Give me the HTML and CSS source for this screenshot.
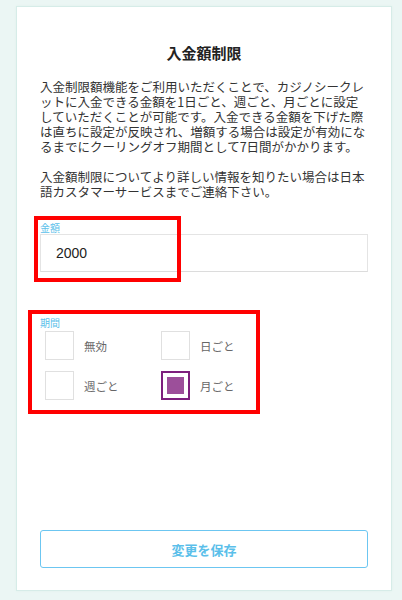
FILE: index.html
```html
<!DOCTYPE html>
<html lang="ja">

<head>
    <meta charset="UTF-8">
    <meta name="viewport" content="width=device-width, initial-scale=1.0">
    <title>入金額制限</title>
    <link rel="stylesheet" href="styles.css">
</head>

<body>
    <div class="card">
        <h1 class="title">入金額制限</h1>
        <p class="desc">入金制限額機能をご利用いただくことで、カジノシークレットに入金できる金額を1日ごと、週ごと、月ごとに設定していただくことが可能です。入金できる金額を下げた際は直ちに設定が反映され、増額する場合は設定が有効になるまでにクーリングオフ期間として7日間がかかります。</p>
        <p class="desc">入金額制限についてより詳しい情報を知りたい場合は日本語カスタマーサービスまでご連絡下さい。</p>

        <div class="field amount">
            <label class="field-label" for="amount">金額</label>
            <input class="amount-input" id="amount" type="text" value="2000">
        </div>

        <div class="field period">
            <div class="field-label">期間</div>
            <div class="options">
                <div class="option"><span class="check"></span>無効</div>
                <div class="option"><span class="check"></span>日ごと</div>
                <div class="option"><span class="check"></span>週ごと</div>
                <div class="option"><span class="check checked"></span>月ごと</div>
            </div>
        </div>

        <button class="save">変更を保存</button>

        <!-- 赤枠の注釈 -->
        <div class="mark mark-amount"></div>
        <div class="mark mark-period"></div>
    </div>
</body>

</html>
```

FILE: styles.css
```css
html,
body {
    height: 100%;
    overflow: hidden;
}

body {
    margin: 0;
    padding: 6px 10px 0 16px;
    box-sizing: border-box;
    background: #ebf6f4;
    font-family: "Noto Sans CJK JP", "Noto Sans", sans-serif;
    color: #333;
}

.card {
    position: relative;
    box-sizing: border-box;
    height: 585px;
    padding: 35px 23px 22px;
    background: #fff;
    border: 1px solid #d6ece8;
    box-shadow: 0 0 2px #e0f0ec;
    display: flex;
    flex-direction: column;
}

.title {
    margin: 0;
    font-size: 15px;
    line-height: 22px;
    font-weight: bold;
    text-align: center;
    color: #222;
}

.desc {
    margin: 15px 0 0;
    font-size: 12.5px;
    line-height: 15px;
    color: #333;
}

.desc + .desc {
    margin-top: 15px;
}

.field-label {
    display: block;
    font-size: 10px;
    line-height: 12px;
    color: #5bbfea;
}

.amount {
    margin-top: 23px;
}

.amount-input {
    display: block;
    box-sizing: border-box;
    width: 100%;
    height: 38px;
    padding: 0 15px;
    border: 1px solid #e4e4e4;
    border-bottom-color: #dcdcdc;
    outline: none;
    font-family: "Liberation Sans", "Noto Sans CJK JP", sans-serif;
    font-size: 14px;
    color: #222;
}

.period {
    margin-top: 45px;
}

.options {
    margin: 2px 0 0 5px;
    display: grid;
    grid-template-columns: 116px 116px;
    row-gap: 11px;
}

.option {
    display: flex;
    align-items: center;
    gap: 10px;
    font-size: 11.5px;
    color: #666;
}

.check {
    position: relative;
    box-sizing: border-box;
    width: 29px;
    height: 29px;
    border: 1px solid #e0e0e0;
    background: #fff;
}

.check.checked {
    border: 2px solid #7d1f7d;
}

.check.checked::after {
    content: "";
    position: absolute;
    left: 4px;
    top: 4px;
    width: 17px;
    height: 17px;
    background: #9c4f9a;
}

.save {
    margin-top: auto;
    height: 38px;
    background: #fff;
    border: 1.5px solid #6cc6f1;
    border-radius: 3px;
    font-family: "Noto Sans CJK JP", sans-serif;
    font-size: 13px;
    font-weight: bold;
    color: #5bbfea;
    cursor: pointer;
}

/* 注釈の赤枠 */
.mark {
    position: absolute;
    box-sizing: border-box;
    border: 4px solid #f00;
}

.mark-amount {
    left: 17px;
    top: 209px;
    width: 147px;
    height: 66px;
}

.mark-period {
    left: 11px;
    top: 303px;
    width: 232px;
    height: 104px;
}
```
